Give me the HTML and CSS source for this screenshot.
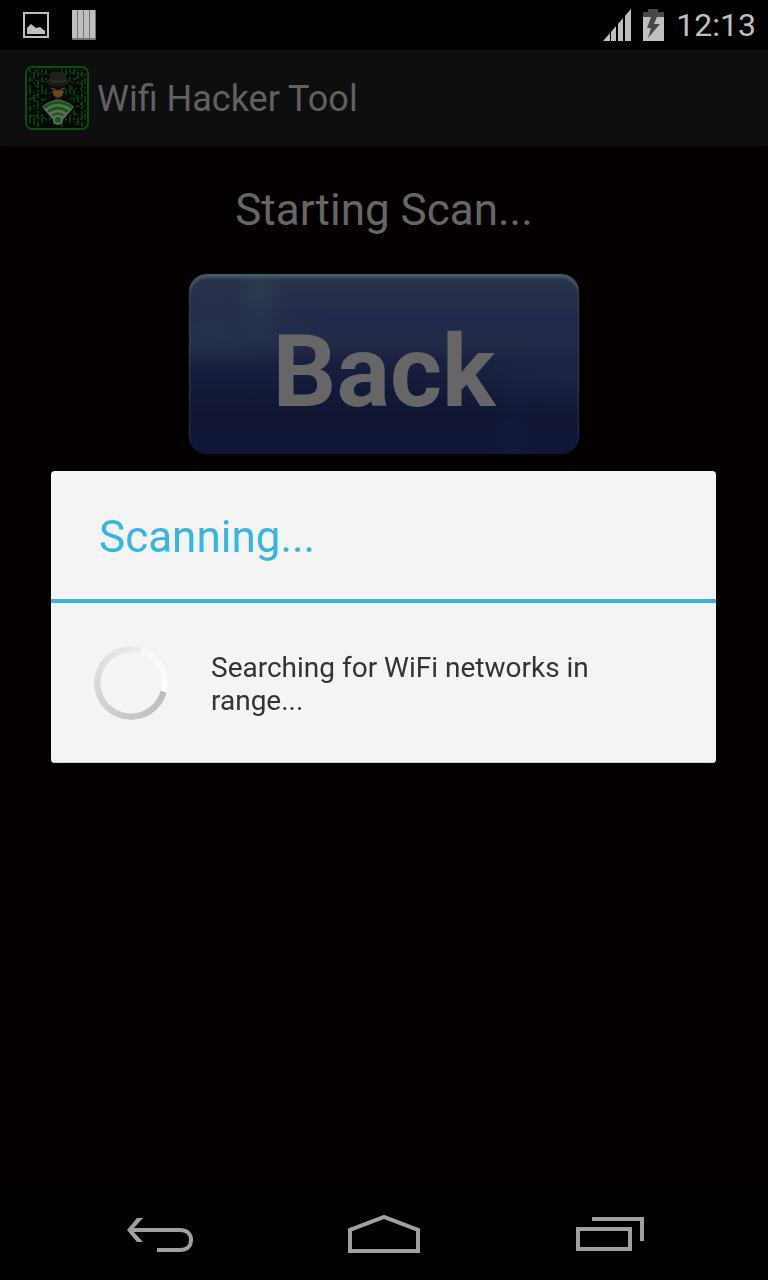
FILE: index.html
```html
<!DOCTYPE html>
<html lang="en">
<head>
    <meta charset="UTF-8">
    <meta name="viewport" content="width=device-width, initial-scale=1.0">
    <title>Wifi Hacker Tool</title>
    <link rel="stylesheet" href="styles.css">
</head>
<body>

<header class="status-bar">
    <div class="notifications">
        <svg width="26" height="26" viewBox="0 0 26 26">
            <rect x="1" y="1" width="24" height="24" fill="none" stroke="#bfbfbf" stroke-width="2"/>
            <path d="M4 22V16L8 12L13 16L17 15L22 19V22Z" fill="#bfbfbf"/>
        </svg>
        <svg width="24" height="30" viewBox="0 0 24 30">
            <rect width="24" height="30" rx="1" fill="#747474"/>
            <path d="M0 0H5V28H0ZM6 0H11V28H6ZM12 0H17V28H12ZM18 0H23V28H18Z" fill="#bfbfbf"/>
        </svg>
    </div>
    <div class="system-icons">
        <svg width="28" height="32" viewBox="0 0 28 32">
            <path d="M0 32L7 24V32ZM8 32V23L13 17V32ZM15 32V15L20 9V32ZM22 32V7L28 0V32Z" fill="#bfbfbf"/>
        </svg>
        <svg width="21" height="32" viewBox="0 0 21 32">
            <path d="M5 0H15V3H21V8H0V3H5Z" fill="#484848"/>
            <rect y="8" width="21" height="24" fill="#bfbfbf"/>
            <path d="M8 8H14L11 15H17L5 29L8 19H4Z" fill="#484848"/>
        </svg>
        <span class="clock">12:13</span>
    </div>
</header>

<div class="action-bar">
    <svg class="app-icon" width="64" height="64" viewBox="0 0 64 64">
        <rect x="1" y="1" width="62" height="62" rx="6" fill="#020802"/>
        <!-- falling code -->
        <g fill="none" stroke="#083a0d" stroke-width="2">
            <path d="M5 3V61M17 3V61M45 3V61" stroke-dasharray="3 2 1 2 5 3 9 4"/>
            <path d="M9 3V61M29 3V61M53 3V61" stroke-dasharray="1 2 7 3 2 8"/>
            <path d="M13 3V61M37 3V61M57 3V61" stroke-dasharray="2 1 5 3 8 2"/>
            <path d="M21 3V61M41 3V61M49 3V61" stroke-dasharray="6 3 2 1 1 7"/>
            <path d="M25 3V61M33 3V61M60 3V61" stroke-dasharray="1 4 2 2 6 3"/>
        </g>
        <g fill="none" stroke="#1a5c22" stroke-width="1">
            <path d="M7 6V58M51 4V60M19 8V56" stroke-dasharray="1 6 2 9"/>
            <path d="M11 4V60M47 6V50M56 7V59" stroke-dasharray="2 8 1 4"/>
        </g>
        <rect x="1" y="1" width="62" height="62" rx="6" fill="none" stroke="#0d4d10" stroke-width="2"/>
        <!-- spy -->
        <path d="M16 43C16 35 22 33 28 29H38C44 33 49 35 50 43L43 51H23Z" fill="#08090a"/>
        <path d="M24 18H41L40 27L33 33L26 27Z" fill="#100e0c"/>
        <path d="M27 25L33 24L39 25L37 30L33 32L29 30Z" fill="#6e461c"/>
        <path d="M26 22L31 24M40 22L35 24" stroke="#606060" stroke-width="1"/>
        <path d="M29 33L33 31L37 33L35 36H31Z" fill="#202226"/>
        <path d="M24 16L26 7Q29 4 33 6Q37 4 40 7L42 16Q33 20 24 16Z" fill="#202020"/>
        <path d="M21 15Q22 13 25 14Q33 18 41 14Q45 12 45 16Q41 21 33 20Q23 21 21 15Z" fill="#1b1b1b"/>
        <path d="M25 14Q33 18 41 14" fill="none" stroke="#3b3b3b" stroke-width="1"/>
        <!-- wifi badge -->
        <path d="M19 41Q33 30 47 41L34 56H32Z" fill="#676767" stroke="#676767" stroke-width="3" stroke-linejoin="round"/>
        <circle cx="33" cy="54" r="5" fill="#676767"/>
        <g fill="none" stroke="#07600b" stroke-linecap="round">
            <path d="M20 41Q33 32 46 41" stroke-width="3"/>
            <path d="M24 45Q33 39 42 45" stroke-width="3"/>
            <path d="M28 49Q33 46 38 49" stroke-width="2"/>
        </g>
        <circle cx="33" cy="54" r="3" fill="#07600b"/>
    </svg>
    <h1>Wifi Hacker Tool</h1>
</div>

<main class="content">
    <p class="scan-status">Starting Scan...</p>
    <button type="button" class="back-button">Back</button>
</main>

<div class="dialog-layer">
    <section class="dialog" role="dialog" aria-labelledby="dialogTitle">
        <h2 id="dialogTitle">Scanning...</h2>
        <div class="dialog-body">
            <div class="spinner"></div>
            <p>Searching for WiFi networks in range...</p>
        </div>
    </section>
</div>

<nav class="nav-bar">
    <button type="button" aria-label="Back">
        <svg width="68" height="36" viewBox="0 0 68 36">
            <path d="M3 14H54C62 14 65 19 65 24S62 34 54 34H31" fill="none" stroke="#a0a0a0" stroke-width="4"/>
            <path d="M11 2H17L6 14L17 26H11L1 14Z" fill="#a0a0a0"/>
        </svg>
    </button>
    <button type="button" aria-label="Home">
        <svg width="72" height="38" viewBox="0 0 72 38">
            <path d="M2 36V15L36 2L70 15V36Z" fill="none" stroke="#a0a0a0" stroke-width="4"/>
        </svg>
    </button>
    <button type="button" aria-label="Recent apps">
        <svg width="72" height="34" viewBox="0 0 72 34">
            <path d="M6 12H58V32H6ZM20 2H70V24" fill="none" stroke="#a0a0a0" stroke-width="4"/>
        </svg>
    </button>
</nav>

</body>
</html>
```
FILE: styles.css
```css
* {
    box-sizing: border-box;
}

body {
    font-family: Roboto, sans-serif;
    background-color: #050000;
    margin: 0;
    min-height: 100vh;
    display: flex;
    flex-direction: column;
}

h1, h2, p {
    margin: 0;
    font-weight: normal;
}

svg {
    display: block;
}

button {
    font-family: inherit;
    border: none;
    cursor: pointer;
}

.status-bar {
    height: 50px;
    padding: 0 12px 0 23px;
    background-color: #000;
    display: flex;
    align-items: center;
    justify-content: space-between;
}

.notifications {
    display: flex;
    align-items: center;
    gap: 23px;
}

.system-icons {
    display: flex;
    align-items: center;
    gap: 12px;
}

.clock {
    font-size: 32px;
    line-height: 50px;
    color: #bfbfbf;
}

.action-bar {
    height: 96px;
    padding: 0 25px;
    background-color: #0e0e0e;
    box-shadow: inset 0 1px 0 #151515, 0 1px 3px #0a0505;
    display: flex;
    align-items: center;
    gap: 8px;
}

.action-bar h1 {
    padding-top: 2px;
    font-size: 36px;
    line-height: 48px;
    color: #616161;
}

.content {
    flex: 1;
    padding: 36px 16px;
    display: flex;
    flex-direction: column;
    align-items: center;
    gap: 36px;
}

.scan-status {
    font-size: 44px;
    line-height: 56px;
    color: #666;
}

.back-button {
    width: 390px;
    max-width: 100%;
    height: 180px;
    padding: 16px 0 0;
    border-radius: 18px;
    color: #666;
    font-size: 100px;
    font-weight: bold;
    line-height: 120px;
    /* glossy blue with soft light spots */
    background:
        radial-gradient(ellipse at 6% 30%, rgba(40, 56, 80, 0.6), transparent 24%),
        radial-gradient(ellipse at 98% 58%, rgba(30, 42, 76, 0.5), transparent 28%),
        radial-gradient(ellipse 24px 60px at 18% 10%, rgba(48, 64, 80, 0.6), transparent),
        radial-gradient(ellipse 24px 60px at 83% 94%, rgba(20, 30, 66, 0.6), transparent),
        linear-gradient(#28344a, #262f4a 14%, #22284a 24%, #222b48 38%, #1a2140 48%, #141b3a 62%, #0f1531 78%, #0f1638);
    box-shadow: inset 0 4px 3px #455a66, 0 0 2px #0d1830;
}

/* sits between the status bar and the navigation bar */
.dialog-layer {
    position: fixed;
    top: 50px;
    right: 0;
    bottom: 96px;
    left: 0;
    padding: 0 52px 0 51px;
    display: flex;
    align-items: center;
    justify-content: center;
}

.dialog {
    width: 100%;
    max-width: 720px;
    background-color: #f4f4f4;
    border-radius: 4px;
    box-shadow: inset 0 -1px 0 #cfcfcf, 0 2px 10px #000;
}

.dialog h2 {
    padding: 38px 48px 34px;
    border-bottom: 4px solid #33b5e5;
    font-size: 44px;
    line-height: 56px;
    color: #33b5e5;
}

.dialog-body {
    min-height: 160px;
    padding: 32px 43px;
    display: flex;
    align-items: center;
    gap: 43px;
}

.dialog-body p {
    flex: 1;
    padding-top: 2px;
    font-size: 28px;
    line-height: 33px;
    color: #333;
}

.spinner {
    width: 74px;
    height: 74px;
    border-radius: 50%;
    background: conic-gradient(from 105deg, #bcbcbc, #c8c8c8 80deg, #d8d8d8 160deg, #e6e6e6 240deg, #ececec 270deg, #f8f8f8 275deg, #fdfdfd);
    -webkit-mask: radial-gradient(circle, transparent 30px, #000 31px);
    mask: radial-gradient(circle, transparent 30px, #000 31px);
}

.nav-bar {
    height: 96px;
    padding: 0 48px;
    background-color: #000;
    display: grid;
    grid-template-columns: repeat(3, 1fr);
}

.nav-bar button {
    background: none;
    padding: 4px 0 0;
    display: flex;
    align-items: center;
    justify-content: center;
}
```
